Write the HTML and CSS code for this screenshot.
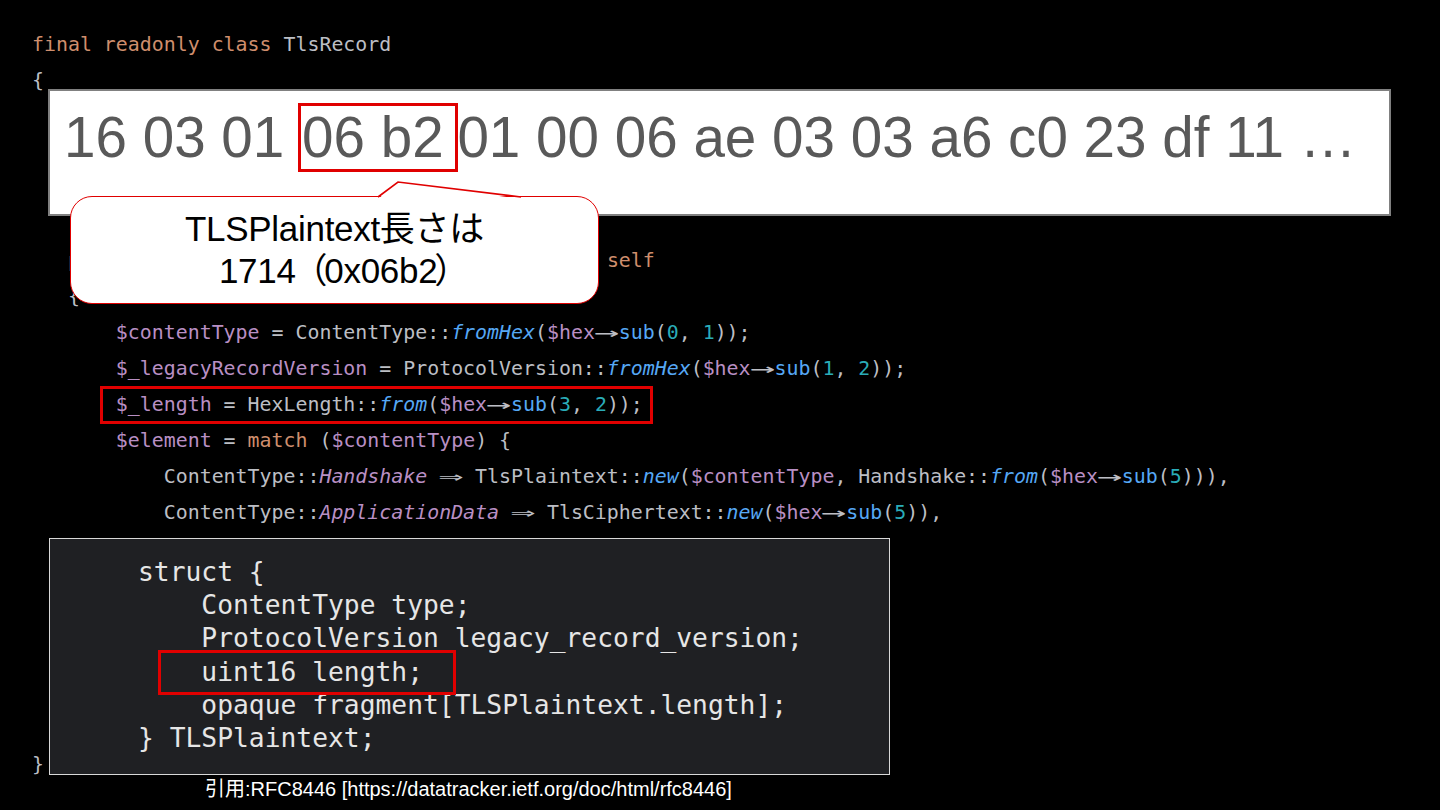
FILE: index.html
```html
<!DOCTYPE html>
<html lang="ja">
<head>
<meta charset="utf-8">
<title>TlsRecord</title>
<link rel="stylesheet" href="styles.css">
</head>
<body>
<div class="slide">
<pre class="code"><span class="kw">final readonly class</span> TlsRecord
{
   <span class="kw">public function</span> <span class="fn">__construct</span>(
       <span class="kw">public</span> ContentType <span class="var">$contentType</span>,
       <span class="kw">public</span> TlsPlaintext|TlsCiphertext <span class="var">$element</span>,
   ) {}
   <span class="kw">public static function</span> <span class="fn">from</span>(HexString <span class="var">$hex</span>): <span class="kw">self</span>
   {
       <span class="var">$contentType</span> = ContentType::<span class="call">fromHex</span>(<span class="var">$hex</span><span class="lig"><span>→</span></span><span class="fn">sub</span>(<span class="num">0</span>, <span class="num">1</span>));
       <span class="var">$_legacyRecordVersion</span> = ProtocolVersion::<span class="call">fromHex</span>(<span class="var">$hex</span><span class="lig"><span>→</span></span><span class="fn">sub</span>(<span class="num">1</span>, <span class="num">2</span>));
       <span class="var">$_length</span> = HexLength::<span class="call">from</span>(<span class="var">$hex</span><span class="lig"><span>→</span></span><span class="fn">sub</span>(<span class="num">3</span>, <span class="num">2</span>));
       <span class="var">$element</span> = <span class="kw">match</span> (<span class="var">$contentType</span>) {
           ContentType::<span class="const">Handshake</span> <span class="lig"><span>⇒</span></span> TlsPlaintext::<span class="call">new</span>(<span class="var">$contentType</span>, Handshake::<span class="call">from</span>(<span class="var">$hex</span><span class="lig"><span>→</span></span><span class="fn">sub</span>(<span class="num">5</span>))),
           ContentType::<span class="const">ApplicationData</span> <span class="lig"><span>⇒</span></span> TlsCiphertext::<span class="call">new</span>(<span class="var">$hex</span><span class="lig"><span>→</span></span><span class="fn">sub</span>(<span class="num">5</span>)),
       };

       <span class="kw">return new</span> self(<span class="var">$contentType</span>, <span class="var">$element</span>);
   }

   <span class="kw">public function</span> <span class="fn">toHex</span>(): <span class="kw">string</span>
}</pre>

  <div class="hl hl-code"></div>

  <div class="hexbox">
    <div class="hex">16 03 01 <span class="mark">06 b2</span> 01 00 06 ae 03 03 a6 c0 23 df 11 …</div>
  </div>

  <div class="callout">
    <svg class="pointer" width="170" height="20" viewBox="0 0 170 20">
      <polygon points="9,19 29,2 152,19" fill="#ffffff"/>
      <polyline points="9,17 29,2 152,17" fill="none" stroke="#e00000" stroke-width="1.6"/>
    </svg>
    <div class="callout-text">
      <div>TLSPlaintext長さは</div>
      <div class="line2">1714<span class="paren">（</span>0x06b2<span class="paren">）</span></div>
    </div>
  </div>

  <div class="struct">
<pre class="rfc">struct {
    ContentType type;
    ProtocolVersion legacy_record_version;
    uint16 length;
    opaque fragment[TLSPlaintext.length];
} TLSPlaintext;</pre>
    <div class="hl hl-struct"></div>
  </div>

  <div class="cite">引用:RFC8446 [https://datatracker.ietf.org/doc/html/rfc8446]</div>
</div>
</body>
</html>
```

FILE: styles.css
```css
html, body {
  margin: 0;
  padding: 0;
  background: #000000;
}

.slide {
  position: relative;
  width: 1440px;
  height: 810px;
  overflow: hidden;
  background: #000000;
}

.code {
  margin: 0;
  padding: 27px 0 0 32px;
  font-family: "DejaVu Sans Mono", monospace;
  font-size: 19.9px;
  line-height: 36px;
  color: #bcbec4;
  white-space: pre;
}

.kw { color: #cf8e6d; }
.var { color: #b98fc4; }
.fn { color: #56a8f5; }
.call { color: #56a8f5; font-style: italic; }
.const { color: #b98fc4; font-style: italic; }
.num { color: #2aacb8; }

.lig {
  display: inline-block;
  width: 2ch;
  text-align: center;
}

.lig span {
  display: inline-block;
  transform: scaleX(2.1);
}

.hl {
  position: absolute;
  border: 3px solid #e00000;
  box-sizing: border-box;
}

.hl-code {
  left: 100px;
  top: 386px;
  width: 553px;
  height: 38px;
}

.hexbox {
  position: absolute;
  left: 48px;
  top: 89px;
  width: 1343px;
  height: 127px;
  box-sizing: border-box;
  background: #ffffff;
  border: 2px solid #808080;
  padding: 17px 0 0 14px;
}

.hex {
  font-family: "Liberation Sans", Arial, sans-serif;
  font-size: 56.6px;
  line-height: 60px;
  color: #595959;
  white-space: nowrap;
}

.mark {
  border: 3px solid #e00000;
  padding: 0 11px 0 1px;
  margin: 0 -16px 0 -2px;
}

.callout {
  position: absolute;
  left: 70px;
  top: 196px;
  width: 529px;
  height: 108px;
  box-sizing: border-box;
  background: #ffffff;
  border: 1.6px solid #e00000;
  border-radius: 22px;
  display: flex;
  align-items: center;
  justify-content: center;
}

.pointer {
  position: absolute;
  left: 298px;
  top: -17px;
}

.callout-text {
  font-family: "Liberation Sans", Arial, "Noto Sans CJK JP", sans-serif;
  font-size: 35px;
  line-height: 42px;
  color: #000000;
  text-align: center;
  letter-spacing: -0.3px;
}

.line2 {
  padding-left: 16px;
}

.paren {
  margin: 0 -3px;
}

.struct {
  position: absolute;
  left: 49px;
  top: 538px;
  width: 841px;
  height: 237px;
  box-sizing: border-box;
  background: #1f2023;
  border: 1.5px solid #d8d8d8;
  padding: 17px 0 0 88px;
}

.rfc {
  margin: 0;
  font-family: "DejaVu Sans Mono", monospace;
  font-size: 26.3px;
  line-height: 33.2px;
  color: #e6e6e6;
  white-space: pre;
}

.hl-struct {
  left: 108px;
  top: 111px;
  width: 298px;
  height: 45px;
}

.cite {
  position: absolute;
  left: 205px;
  top: 777px;
  font-family: "Liberation Sans", Arial, "Noto Sans CJK JP", sans-serif;
  font-size: 20px;
  line-height: 24px;
  color: #ffffff;
  white-space: nowrap;
}
```
